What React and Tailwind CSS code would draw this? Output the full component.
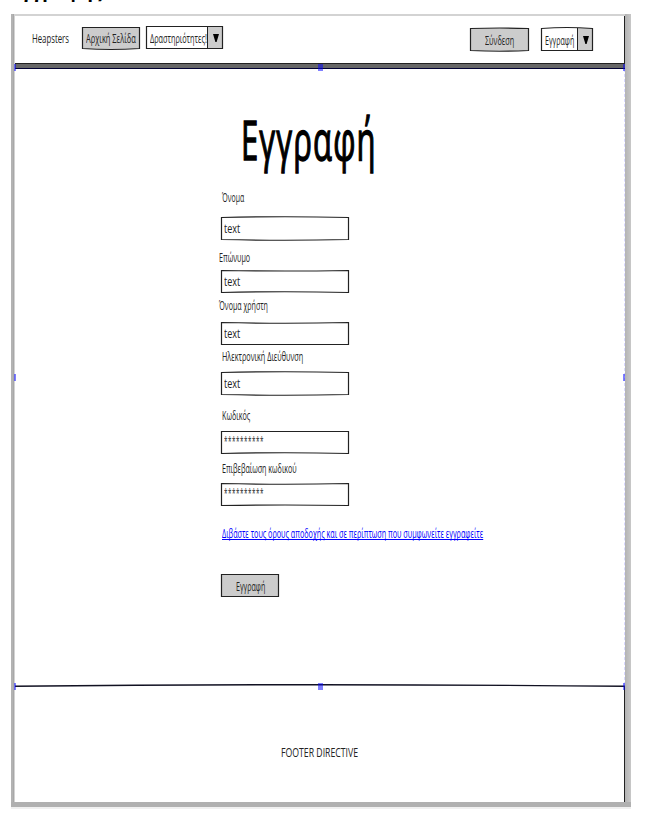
import { useLayoutEffect, useRef } from 'react';

// Text squeezed horizontally to a given width, for the narrow hand-lettered look.
function Fit({ w, className = '', inner = '', children }) {
  const ref = useRef(null);
  useLayoutEffect(() => {
    const el = ref.current;
    el.style.transform = `scaleX(${w / el.offsetWidth})`;
  }, [w]);
  return (
    <span className={`block ${className}`} style={{ width: w }}>
      <span ref={ref} className={`inline-block origin-left whitespace-pre ${inner}`}>{children}</span>
    </span>
  );
}

// Slightly bowed outline of a sketched box.
function Sketch({ w, h, top = 0, bottom = 0 }) {
  return (
    <svg className="pointer-events-none absolute inset-0 overflow-visible" width={w} height={h} fill="none" stroke="#222" strokeWidth="1.2">
      <path d={`M.5 .5Q${w / 2} ${0.5 + top} ${w - 0.5} .5V${h - 0.5}Q${w / 2} ${h - 0.5 + bottom} .5 ${h - 0.5}Z`} />
    </svg>
  );
}

function Field({ value, top, bottom, className = '' }) {
  return (
    <div className={`relative ml-[3px] h-[23px] w-[128px] pl-[3px] ${className}`}>
      <Sketch w={128} h={23} top={top} bottom={bottom} />
      {value === 'text' ? (
        <Fit w={16} className="pt-[3px] text-[13px] leading-4">text</Fit>
      ) : (
        <Fit w={40} className="pt-[3px] text-[12px] leading-4" inner="tracking-[1px]">{value}</Fit>
      )}
    </div>
  );
}

function Arrow() {
  return (
    <svg className="mt-px" width="6" height="9" viewBox="0 0 6 9"><path d="M0 0H6L3.6 8H2.4Z" fill="#000" /></svg>
  );
}

function Handle({ className }) {
  return <i className={`absolute h-[7px] bg-[#0000ff]/50 ${className}`} />;
}

export default function App() {
  return (
    <div className="relative h-[821px] w-[646px] overflow-hidden bg-white font-['Open_Sans','Noto_Sans',sans-serif] text-[12px] leading-4 text-[#222]">
      <div className="flex h-[14px] items-start pl-[11px]">
        <Fit w={91} className="-mt-[21px] h-[24px] text-[18px] font-bold leading-6 text-black">Εγγραφής</Fit>
      </div>
      <div className="ml-[11px] flex h-[795px] w-[620px] flex-col border-b-2 border-[#f0f0f0]">
        <div className="flex h-[788px]">
          <div className="w-[3px] border-r border-[#a8a8a8] bg-[#b3b3b3]" />
          <div className="relative w-[611px] border-l border-t-2 border-[#d3d3d3] bg-white">
            <header className="flex h-[47px] pl-[17px]">
              <Fit w={37} className="mt-[15px]">Heapsters</Fit>
              <div className="relative ml-[13px] mt-[11px] h-[22px] w-[58px] bg-[#ccc] pl-[4px] pt-[4px]">
                <Sketch w={58} h={22} bottom={2} />
                <Fit w={50}>Αρχική Σελίδα</Fit>
              </div>
              <div className="relative ml-[6px] mt-[10px] flex h-[23px] w-[77px]">
                <div className="w-[61px] pl-[4px] pt-[5px]"><Fit w={57}>Δραστηριότητες!</Fit></div>
                <div className="flex w-4 items-center justify-center border-l border-[#222] bg-[#ccc]"><Arrow /></div>
                <Sketch w={77} h={23} />
              </div>
              <div className="relative ml-[247px] mt-[12px] h-[23px] w-[59px] bg-[#ccc] pl-[15px] pt-[5px]">
                <Sketch w={59} h={23} top={-1} bottom={1.5} />
                <Fit w={29}>Σύνδεση</Fit>
              </div>
              <div className="relative ml-[12px] mt-[12px] flex h-[23px] w-[52px]">
                <div className="w-[36px] pl-[4px] pt-[5px]"><Fit w={29}>Εγγραφή</Fit></div>
                <div className="flex w-4 items-center justify-center border-l border-[#222] bg-[#ccc]"><Arrow /></div>
                <Sketch w={52} h={23} top={-2} />
              </div>
            </header>
            <div className="h-[6px] border-b border-t border-b-[#000033] border-t-[#222] bg-[#666]" />

            <main className="flow-root h-[616px] pl-[203px]">
              <Fit w={136} className="ml-[23px] h-[120px] pt-[30px] text-[54px] leading-[80px] text-black" inner="tracking-[2px] [-webkit-text-stroke:1.4px_#000] [stroke-linejoin:round]">Εγγραφή</Fit>
              <Fit w={22} className="ml-[4px] mt-[1px]">Όνομα</Fit>
              <Field value="text" top={-1.5} bottom={1.5} className="mt-[11px]" />
              <Fit w={31} className="ml-[1px] mt-[10px]">Επώνυμο</Fit>
              <Field value="text" top={1} bottom={-1.5} className="mt-[4px]" />
              <Fit w={49} className="ml-[1px] mt-[5px]">Όνομα χρήστη</Fit>
              <Field value="text" top={1.5} bottom={0} className="mt-[8px]" />
              <Fit w={81} className="ml-[4px] mt-[4px]">Ηλεκτρονική Διεύθυνση</Fit>
              <Field value="text" top={-1.5} bottom={1.5} className="mt-[7px]" />
              <Fit w={28} className="ml-[4px] mt-[13px]">Κωδικός</Fit>
              <Field value="**********" top={0} bottom={-1.5} className="mt-[7px]" />
              <Fit w={75} className="ml-[4px] mt-[7px]">Επιβεβαίωση κωδικού</Fit>
              <Field value="**********" top={1.5} bottom={-1} className="mt-[6px]" />
              <a className="ml-[4px] mt-[20px] block h-4 w-[261px] text-[#0000ff]">
                <Fit w={261} inner="underline decoration-1 underline-offset-1 [text-decoration-skip-ink:none]">Διβάστε τους όρους αποδοχής και σε περίπτωση που συμφωνείτε εγγραφείτε</Fit>
              </a>
              <div className="relative ml-[3px] mt-[32px] h-[23px] w-[58px] bg-[#ccc] pl-[15px] pt-[5px]">
                <Sketch w={58} h={23} />
                <Fit w={29}>Εγγραφή</Fit>
              </div>
            </main>

            <svg className="block overflow-visible" width="610" height="3" fill="none">
              <path d="M0 1.3Q305 -1.8 610 1.3" stroke="#111122" strokeWidth="1.4" />
            </svg>
            <footer className="pl-[266px] pt-[57px]">
              <Fit w={77}>FOOTER DIRECTIVE</Fit>
            </footer>

            <i className="absolute right-0 top-0 h-[47px] w-px bg-[#222]" />
            <i className="absolute right-0 top-[53px] h-[616px] border-r border-dashed border-[#d8d8ff]" />
            <i className="absolute bottom-0 right-0 h-[116px] w-px bg-[#222]" />
            <Handle className="-left-px top-[48px] w-[2px]" />
            <Handle className="left-[303px] top-[48px] w-[5px]" />
            <Handle className="right-0 top-[48px] w-[2px]" />
            <Handle className="-left-px top-[358px] w-[2px]" />
            <Handle className="right-0 top-[358px] w-[2px]" />
            <Handle className="-left-px top-[667px] w-[2px]" />
            <Handle className="left-[303px] top-[667px] w-[5px]" />
            <Handle className="right-0 top-[667px] w-[2px]" />
          </div>
          <div className="w-[6px] bg-gradient-to-r from-[#b3b3b3] to-[#c8c8c8]" />
        </div>
        <div className="h-[5px] shrink-0 bg-[#b0b0b0]" />
      </div>
    </div>
  );
}
